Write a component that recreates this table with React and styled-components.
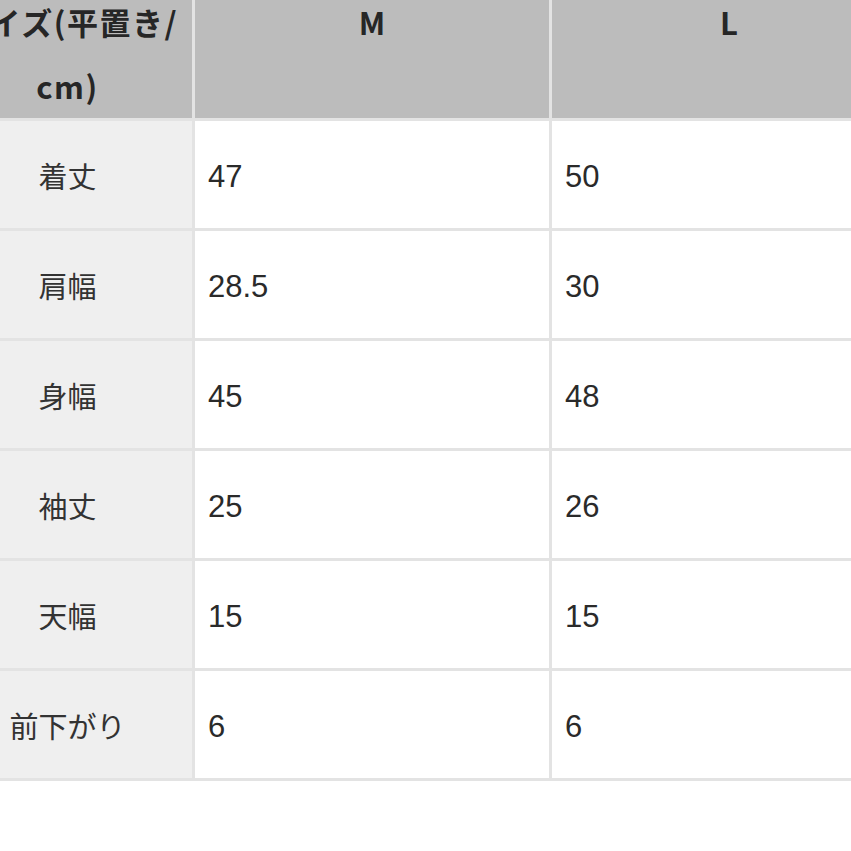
import React from "react";
import styled, { createGlobalStyle } from "styled-components";

const GlobalStyle = createGlobalStyle`
  html, body {
    margin: 0;
    padding: 0;
    background: #ffffff;
    overflow: hidden;
  }
  body {
    width: 851px;
    height: 851px;
    font-family: "Liberation Sans", "Noto Sans CJK JP", sans-serif;
    color: #2e2e2e;
  }
`;

const Viewport = styled.div`
  width: 851px;
  height: 851px;
  overflow: hidden;
`;

const Table = styled.table`
  margin-top: -13px;
  margin-left: -60px;
  border-collapse: separate;
  border-spacing: 3px;
  background: #e3e3e3;
  table-layout: fixed;
  width: 969px;
`;

const Col = styled.col`
  width: ${(p) => p.$w}px;
`;

const HeadCell = styled.th`
  box-sizing: border-box;
  background: #bcbcbc;
  height: 128px;
  padding: 0;
  vertical-align: top;
  text-align: center;
  font-family: "Noto Sans CJK JP", "Liberation Sans", sans-serif;
  font-weight: 700;
  font-size: 31px;
  line-height: 64px;
  letter-spacing: ${(p) => (p.$wide ? "1.5px" : "0")};
  color: #262626;
`;

const LabelCell = styled.td`
  box-sizing: border-box;
  background: #efefef;
  height: 107px;
  padding: 2px 0 0 0;
  text-align: center;
  vertical-align: middle;
  font-family: "Noto Sans CJK JP", sans-serif;
  font-size: 29px;
  line-height: 1;
  color: #333333;
`;

const ValueCell = styled.td`
  box-sizing: border-box;
  background: #ffffff;
  height: 107px;
  padding: 4px 0 0 13px;
  text-align: left;
  vertical-align: middle;
  font-family: "Liberation Sans", "Noto Sans CJK JP", sans-serif;
  font-size: 31px;
  line-height: 1;
  color: #2a2a2a;
`;

const rows = [
  ["着丈", "47", "50"],
  ["肩幅", "28.5", "30"],
  ["身幅", "45", "48"],
  ["袖丈", "25", "26"],
  ["天幅", "15", "15"],
  ["前下がり", "6", "6"],
];

export default function App() {
  return (
    <Viewport>
      <GlobalStyle />
      <Table>
        <colgroup>
          <Col $w={249} />
          <Col $w={354} />
          <Col $w={354} />
        </colgroup>
        <thead>
          <tr>
            <HeadCell $wide>
              サイズ(平置き/
              <br />
              cm)
            </HeadCell>
            <HeadCell>M</HeadCell>
            <HeadCell>L</HeadCell>
          </tr>
        </thead>
        <tbody>
          {rows.map(([label, m, l]) => (
            <tr key={label}>
              <LabelCell>{label}</LabelCell>
              <ValueCell>{m}</ValueCell>
              <ValueCell>{l}</ValueCell>
            </tr>
          ))}
        </tbody>
      </Table>
    </Viewport>
  );
}
